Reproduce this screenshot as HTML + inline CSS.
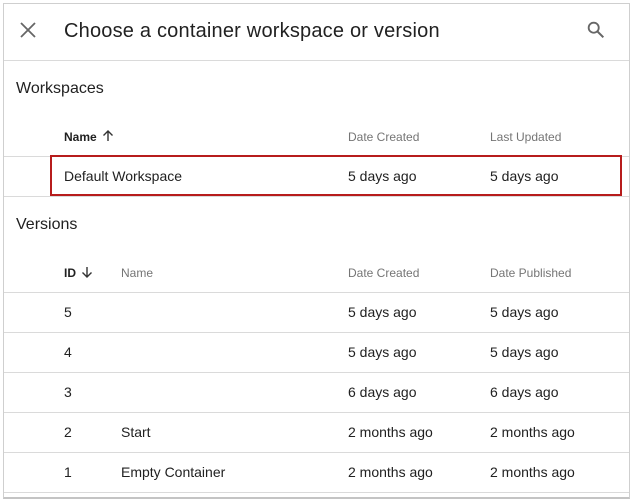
<!DOCTYPE html><html><head><style>
body{margin:0;width:633px;height:502px;background:#fff;font-family:"Liberation Sans",sans-serif;position:relative;overflow:hidden}
.a{position:absolute;white-space:nowrap}
.frame{position:absolute;left:3px;top:3px;width:625px;height:493px;border:1px solid #cfcfcf;border-bottom:2px solid #c4c4c4}
.hl{position:absolute;left:4px;width:625px;height:1px;background:#dadada}
.t{font-size:14px;color:#212121}
.h{font-size:12px;color:#757575}
</style></head><body>
<div class="frame"></div>
<svg class="a" style="left:18px;top:20px" width="20" height="20" viewBox="0 0 20 20"><path d="M3 3L17 17M17 3L3 17" stroke="#666" stroke-width="1.8"/></svg>
<div class="a" style="left:64px;top:20px;font-size:20px;color:#212121;letter-spacing:0.2px">Choose a container workspace or version</div>
<svg class="a" style="left:585px;top:19px" width="22" height="22" viewBox="0 0 24 24"><circle cx="9.5" cy="9.5" r="5.5" fill="none" stroke="#666" stroke-width="2"/><path d="M13.5 13.5L20 20" stroke="#666" stroke-width="2.2"/></svg>
<div class="hl" style="top:60px"></div>
<div class="a" style="left:16px;top:80px;font-size:16px;color:#212121">Workspaces</div>
<div class="a h" style="left:64px;top:130px;color:#212121;font-weight:bold">Name</div>
<svg class="a" style="left:101px;top:129px" width="14" height="14" viewBox="0 0 14 14"><path d="M7 12V2M2.5 6.5L7 2l4.5 4.5" fill="none" stroke="#333" stroke-width="1.4"/></svg>
<div class="a h" style="left:348px;top:130px">Date Created</div>
<div class="a h" style="left:490px;top:130px">Last Updated</div>
<div class="hl" style="top:156px"></div>
<div class="a t" style="left:64px;top:168px">Default Workspace</div>
<div class="a t" style="left:348px;top:168px">5 days ago</div>
<div class="a t" style="left:490px;top:168px">5 days ago</div>
<div class="hl" style="top:196px"></div>
<div class="a" style="left:50px;top:155px;width:568px;height:37px;border:2px solid #b71c1c"></div>
<div class="a" style="left:16px;top:216px;font-size:16px;color:#212121">Versions</div>
<div class="a h" style="left:64px;top:266px;color:#212121;font-weight:bold">ID</div>
<svg class="a" style="left:80px;top:265px" width="14" height="14" viewBox="0 0 14 14"><path d="M7 2v10M2.5 7.5L7 12l4.5-4.5" fill="none" stroke="#333" stroke-width="1.4"/></svg>
<div class="a h" style="left:121px;top:266px">Name</div>
<div class="a h" style="left:348px;top:266px">Date Created</div>
<div class="a h" style="left:490px;top:266px">Date Published</div>
<div class="hl" style="top:292px"></div>
<div class="a t" style="left:64px;top:304px">5</div><div class="a t" style="left:348px;top:304px">5 days ago</div><div class="a t" style="left:490px;top:304px">5 days ago</div>
<div class="hl" style="top:332px"></div>
<div class="a t" style="left:64px;top:344px">4</div><div class="a t" style="left:348px;top:344px">5 days ago</div><div class="a t" style="left:490px;top:344px">5 days ago</div>
<div class="hl" style="top:372px"></div>
<div class="a t" style="left:64px;top:384px">3</div><div class="a t" style="left:348px;top:384px">6 days ago</div><div class="a t" style="left:490px;top:384px">6 days ago</div>
<div class="hl" style="top:412px"></div>
<div class="a t" style="left:64px;top:424px">2</div><div class="a t" style="left:121px;top:424px">Start</div><div class="a t" style="left:348px;top:424px">2 months ago</div><div class="a t" style="left:490px;top:424px">2 months ago</div>
<div class="hl" style="top:452px"></div>
<div class="a t" style="left:64px;top:464px">1</div><div class="a t" style="left:121px;top:464px">Empty Container</div><div class="a t" style="left:348px;top:464px">2 months ago</div><div class="a t" style="left:490px;top:464px">2 months ago</div>
<div class="hl" style="top:492px"></div>
</body></html>
